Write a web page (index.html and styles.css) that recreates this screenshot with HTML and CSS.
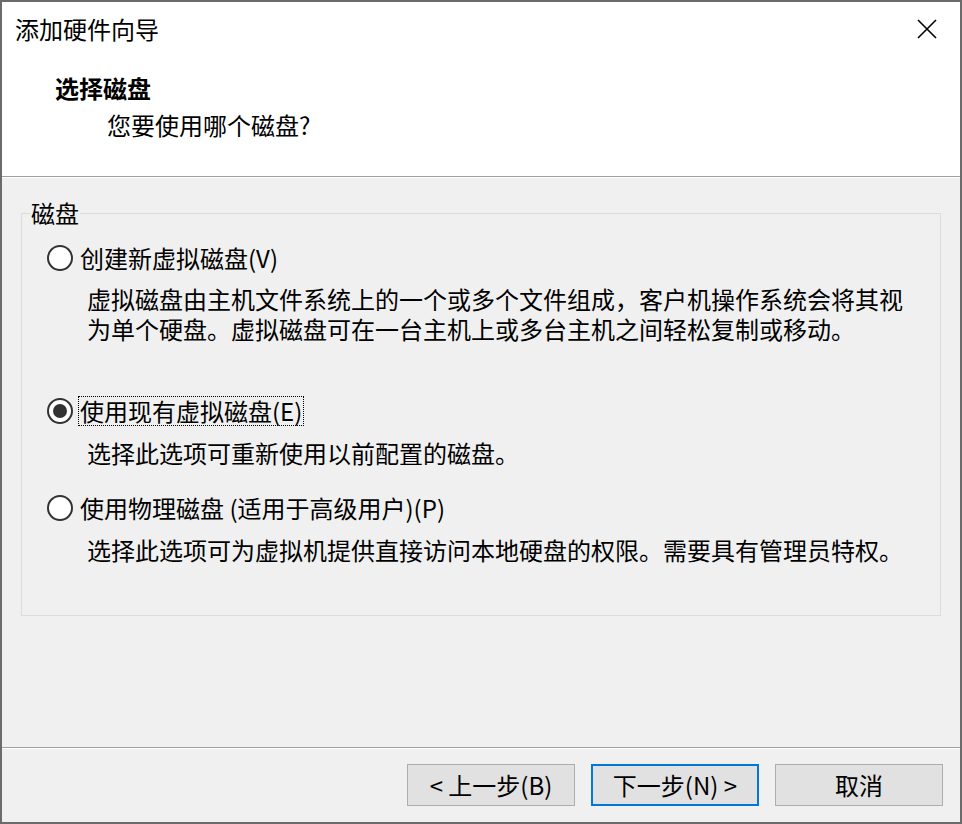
FILE: index.html
```html
<!DOCTYPE html>
<html lang="zh-CN">
<head>
<meta charset="utf-8">
<title>添加硬件向导</title>
<link rel="stylesheet" href="styles.css">
</head>
<body>
<div class="window">
  <header class="head">
    <div class="titlebar">
      <span class="title">添加硬件向导</span>
      <svg class="close" viewBox="0 0 20 20" width="20" height="20"><path d="M1 1 L19 19 M19 1 L1 19" stroke="#000" stroke-width="1.6" fill="none"/></svg>
    </div>
    <div class="page-title">选择磁盘</div>
    <div class="page-sub">您要使用哪个磁盘?</div>
  </header>
  <main class="body">
    <fieldset class="group">
      <legend>磁盘</legend>
      <div class="opts">
        <div class="option opt-1"><span class="radio"></span><span class="label">创建新虚拟磁盘(V)</span></div>
        <div class="desc d-1">
          <div class="line">虚拟磁盘由主机文件系统上的一个或多个文件组成，客户机操作系统会将其视</div>
          <div class="line">为单个硬盘。虚拟磁盘可在一台主机上或多台主机之间轻松复制或移动。</div>
        </div>
        <div class="option opt-2"><span class="radio checked"></span><span class="label focus">使用现有虚拟磁盘(E)</span></div>
        <div class="desc d-2"><div class="line">选择此选项可重新使用以前配置的磁盘。</div></div>
        <div class="option opt-3"><span class="radio"></span><span class="label">使用物理磁盘 (适用于高级用户)(P)</span></div>
        <div class="desc d-3"><div class="line">选择此选项可为虚拟机提供直接访问本地硬盘的权限。需要具有管理员特权。</div></div>
      </div>
    </fieldset>
  </main>
  <footer class="foot">
    <button class="btn">&lt; 上一步(B)</button>
    <button class="btn default">下一步(N) &gt;</button>
    <button class="btn">取消</button>
  </footer>
</div>
</body>
</html>
```
FILE: styles.css
```css
* { box-sizing: border-box; }
html, body { margin: 0; padding: 0; }
body {
  font-family: "Noto Sans CJK SC", "Noto Sans", sans-serif;
  font-size: 24px;
  color: #000;
  background: #f0f0f0;
}
.window {
  width: 962px;
  height: 824px;
  border: 2px solid #6b6b6b;
  display: flex;
  flex-direction: column;
  background: #f0f0f0;
}
.head {
  height: 175px;
  background: #fff;
  border-bottom: 1px solid #a0a0a0;
  padding: 12px 23px 0 13px;
}
.titlebar {
  display: flex;
  justify-content: space-between;
  align-items: center;
  height: 30px;
  line-height: 30px;
}
.title { font-size: 24px; }
.close { display: block; }
.page-title {
  margin: 29px 0 0 40px;
  line-height: 30px;
  font-weight: bold;
}
.page-sub {
  margin: 7px 0 0 92px;
  line-height: 30px;
}
.body {
  flex: 1;
  border-top: 1px solid #fff;
  border-bottom: 1px solid #a0a0a0;
  padding-top: 20px;
}
.group {
  margin: 0 19px;
  padding: 0 0 50px 0;
  border: 1px solid #dcdcdc;
  min-width: 0;
}
.group legend {
  margin-left: 8px;
  padding: 0 1px;
  line-height: 30px;
}
.opts {
  padding: 15px 0 0 25px;
}
.option {
  display: flex;
  align-items: center;
  height: 30px;
}
.radio {
  width: 26px;
  height: 26px;
  border: 2px solid #333;
  border-radius: 50%;
  background: #fff;
  display: flex;
  align-items: center;
  justify-content: center;
  flex: none;
}
.radio.checked::after {
  content: "";
  width: 14px;
  height: 14px;
  border-radius: 50%;
  background: #333;
}
.label {
  margin-left: 5px;
  padding: 0 1px;
  border: 1px solid transparent;
  line-height: 28px;
}
.label.focus { border: 1px dotted #000; }
.desc {
  margin: 0 0 0 40px;
  display: flex;
  flex-direction: column;
}
.desc .line {
  height: 30px;
  line-height: 30px;
  white-space: nowrap;
}
.d-1 { margin-top: 11px; }
.opt-2 { margin-top: 52px; }
.d-2 { margin-top: 12px; }
.opt-3 { margin-top: 25px; }
.d-3 { margin-top: 12px; }
.foot {
  height: 74px;
  border-top: 1px solid #fff;
  display: flex;
  justify-content: flex-end;
  align-items: flex-start;
  gap: 16px;
  padding: 15px 17px 0 0;
}
.btn {
  width: 168px;
  height: 42px;
  background: #e1e1e1;
  border: 1px solid #adadad;
  font-family: "Noto Sans CJK SC", "Noto Sans", sans-serif;
  font-size: 24px;
  line-height: 30px;
  color: #000;
  padding: 0;
}
.btn.default { border: 2px solid #0078d7; }
```
